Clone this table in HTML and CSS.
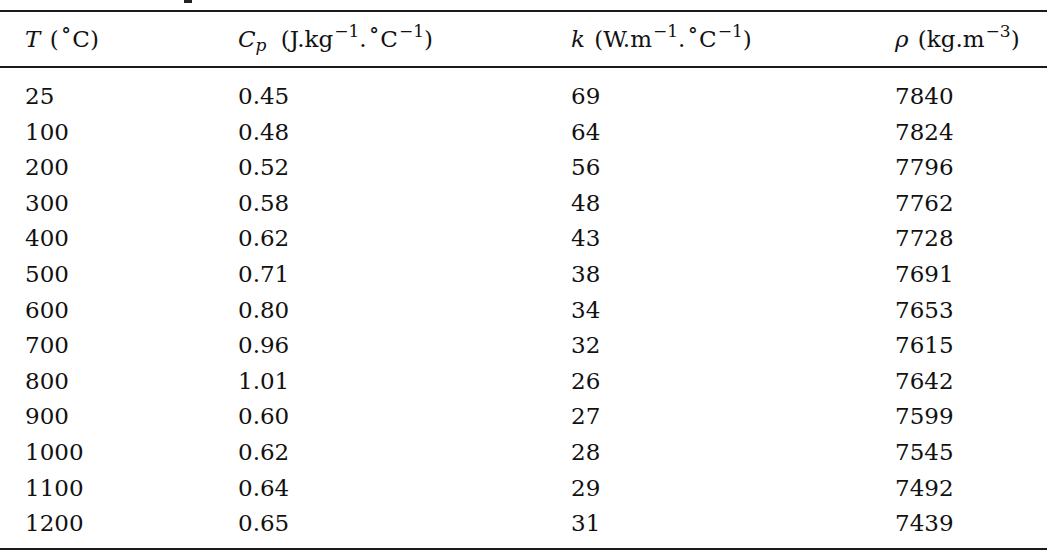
FILE: index.html
```html
<!DOCTYPE html>
<html>
<head>
<meta charset="utf-8">
<link rel="stylesheet" href="styles.css">
</head>
<body>
<div class="caption-clip"><span class="caption-tail"></span></div>
<table class="props">
  <colgroup>
    <col class="c1"><col class="c2"><col class="c3"><col class="c4">
  </colgroup>
  <thead>
    <tr>
      <th class="first"><i>T</i> (<sup class="deg">∘</sup>C)</th>
      <th><i>C<sub><i>p</i></sub></i> <span class="unit">(J.kg<sup>−1</sup>.<sup class="deg">∘</sup>C<sup>−1</sup>)</span></th>
      <th><i>k</i> (W.m<sup>−1</sup>.<sup class="deg">∘</sup>C<sup>−1</sup>)</th>
      <th><i>ρ</i> (kg.m<sup>−3</sup>)</th>
    </tr>
  </thead>
  <tbody>
    <tr><td class="first">25</td><td>0.45</td><td>69</td><td>7840</td></tr>
    <tr><td class="first">100</td><td>0.48</td><td>64</td><td>7824</td></tr>
    <tr><td class="first">200</td><td>0.52</td><td>56</td><td>7796</td></tr>
    <tr><td class="first">300</td><td>0.58</td><td>48</td><td>7762</td></tr>
    <tr><td class="first">400</td><td>0.62</td><td>43</td><td>7728</td></tr>
    <tr><td class="first">500</td><td>0.71</td><td>38</td><td>7691</td></tr>
    <tr><td class="first">600</td><td>0.80</td><td>34</td><td>7653</td></tr>
    <tr><td class="first">700</td><td>0.96</td><td>32</td><td>7615</td></tr>
    <tr><td class="first">800</td><td>1.01</td><td>26</td><td>7642</td></tr>
    <tr><td class="first">900</td><td>0.60</td><td>27</td><td>7599</td></tr>
    <tr><td class="first">1000</td><td>0.62</td><td>28</td><td>7545</td></tr>
    <tr><td class="first">1100</td><td>0.64</td><td>29</td><td>7492</td></tr>
    <tr><td class="first">1200</td><td>0.65</td><td>31</td><td>7439</td></tr>
  </tbody>
</table>
</body>
</html>
```

FILE: styles.css
```css
html, body {
  margin: 0;
  padding: 0;
  background: #ffffff;
}

body {
  font-family: "DejaVu Serif", "Liberation Serif", serif;
  font-size: 23px;
  color: #111111;
  width: 1047px;
  height: 552px;
  overflow: hidden;
}

.caption-clip {
  height: 10px;
  display: flex;
  align-items: flex-start;
}

.caption-tail {
  display: block;
  margin-left: 184px;
  width: 8px;
  height: 3px;
  background: #222222;
}

.props {
  width: 1047px;
  border-collapse: collapse;
  table-layout: fixed;
}

.c1 { width: 238px; }
.c2 { width: 333px; }
.c3 { width: 324px; }
.c4 { width: 152px; }

.props th,
.props td {
  padding: 0;
  text-align: left;
  font-weight: normal;
  white-space: nowrap;
  vertical-align: middle;
}

.props .first {
  padding-left: 25px;
}

.props thead th {
  height: 54px;
  border-top: 2px solid #1a1a1a;
  border-bottom: 2px solid #1a1a1a;
  word-spacing: 2px;
}

.unit {
  margin-left: 5px;
}

.props tbody td {
  height: 35.6px;
  line-height: 35.6px;
}

.props tbody tr:first-child td {
  padding-top: 11px;
}

.props tbody tr:last-child td {
  padding-bottom: 6px;
  border-bottom: 2px solid #1a1a1a;
}

sup {
  font-size: 0.74em;
  line-height: 0;
  vertical-align: 0.6em;
  margin-left: 1px;
}

sub {
  font-size: 0.74em;
  line-height: 0;
  vertical-align: -0.25em;
}

.deg {
  font-size: 0.95em;
  vertical-align: 0.45em;
  margin-left: 2px;
  margin-right: 1px;
}
```
